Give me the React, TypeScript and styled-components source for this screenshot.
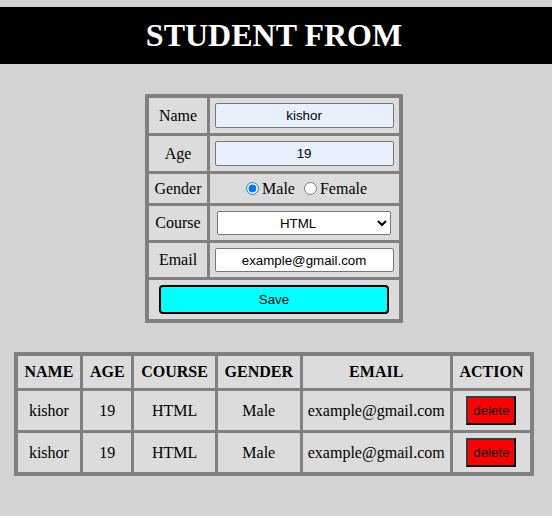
import React from "react";
import styled, { createGlobalStyle } from "styled-components";

const GlobalStyle = createGlobalStyle`
  html, body {
    margin: 0;
    padding: 0;
    background: #d3d3d3;
    font-family: "Liberation Serif", "Times New Roman", serif;
    font-size: 16px;
    color: #000;
  }
`;

const Header = styled.header`
  margin-top: 7px;
  background: #000;
  height: 57px;
  padding-right: 4px;
  display: flex;
  align-items: center;
  justify-content: center;
`;

const Title = styled.h1`
  margin: 0;
  color: #fff;
  font-family: "Liberation Serif", "Times New Roman", serif;
  font-size: 32px;
  font-weight: bold;
  line-height: 37px;
`;

const Main = styled.main`
  display: flex;
  flex-direction: column;
  align-items: center;
  padding: 30px 4px 40px 0;
  gap: 29px;
`;

const Grid = styled.table`
  border: 1px solid #808080;
  background: #808080;
  border-spacing: 3px;
  border-collapse: separate;
`;

const Cell = styled.td<{ $pad?: string }>`
  background: #dcdcdc;
  padding: ${(p) => p.$pad ?? "5px"};
  text-align: center;
  vertical-align: middle;
  font-size: 16px;
  line-height: 18px;
`;

const HeadCell = styled.th`
  background: #dcdcdc;
  padding: 7px 6.8px;
  text-align: center;
  font-size: 16px;
  line-height: 18px;
  font-weight: bold;
`;

const TextInput = styled.input<{ $autofill?: boolean }>`
  box-sizing: border-box;
  width: 179px;
  height: ${(p) => (p.$autofill ? "25px" : "24px")};
  margin: 0;
  display: block;
  border: 1px solid #767676;
  border-radius: 2px;
  background: ${(p) => (p.$autofill ? "#e8f0fe" : "#fff")};
  font-family: "Liberation Sans", Arial, sans-serif;
  font-size: 13.33px;
  text-align: center;
  color: #000;
  padding: 1px 2px;
`;

const Select = styled.select`
  box-sizing: border-box;
  width: 174px;
  height: 24px;
  margin: 0 auto;
  display: block;
  font-family: "Liberation Sans", Arial, sans-serif;
  font-size: 13.33px;
  text-align-last: center;
  color: #000;
`;

const RadioGroup = styled.div`
  display: flex;
  align-items: center;
  justify-content: center;
  font-size: 16px;
  line-height: 19px;
`;

const RadioLabel = styled.label`
  display: inline-flex;
  align-items: center;
  & + & {
    margin-left: 4px;
  }
`;

const Radio = styled.input`
  width: 13px;
  height: 13px;
  margin: 0 3px 0 5px;
`;

const SaveButton = styled.button`
  box-sizing: border-box;
  width: calc(100% - 10px);
  height: 29px;
  margin: 0 auto;
  display: block;
  background: #00ffff;
  border: 2px solid #000;
  border-radius: 4px;
  font-family: "Liberation Sans", Arial, sans-serif;
  font-size: 13.33px;
  color: #000;
`;

const DeleteButton = styled.button`
  box-sizing: border-box;
  width: 50px;
  height: 29px;
  background: #ff0000;
  border-width: 2px;
  border-style: solid;
  border-color: #3c3c3c #000 #000 #3c3c3c;
  font-family: "Liberation Sans", Arial, sans-serif;
  font-size: 13.33px;
  color: #000;
  padding: 0;
`;

const students = [
  { name: "kishor", age: "19", course: "HTML", gender: "Male", email: "example@gmail.com" },
  { name: "kishor", age: "19", course: "HTML", gender: "Male", email: "example@gmail.com" },
];

export default function App() {
  return (
    <>
      <GlobalStyle />
      <Header>
        <Title>STUDENT FROM</Title>
      </Header>
      <Main>
        <Grid>
          <tbody>
            <tr>
              <Cell>Name</Cell>
              <Cell>
                <TextInput $autofill defaultValue="kishor" />
              </Cell>
            </tr>
            <tr>
              <Cell>Age</Cell>
              <Cell>
                <TextInput $autofill defaultValue="19" />
              </Cell>
            </tr>
            <tr>
              <Cell>Gender</Cell>
              <Cell>
                <RadioGroup>
                  <RadioLabel>
                    <Radio type="radio" name="gender" defaultChecked />
                    Male
                  </RadioLabel>
                  <RadioLabel>
                    <Radio type="radio" name="gender" />
                    Female
                  </RadioLabel>
                </RadioGroup>
              </Cell>
            </tr>
            <tr>
              <Cell>Course</Cell>
              <Cell>
                <Select defaultValue="HTML">
                  <option>HTML</option>
                  <option>CSS</option>
                  <option>JavaScript</option>
                </Select>
              </Cell>
            </tr>
            <tr>
              <Cell>Email</Cell>
              <Cell>
                <TextInput defaultValue="example@gmail.com" />
              </Cell>
            </tr>
            <tr>
              <Cell colSpan={2}>
                <SaveButton>Save</SaveButton>
              </Cell>
            </tr>
          </tbody>
        </Grid>

        <Grid>
          <thead>
            <tr>
              <HeadCell>NAME</HeadCell>
              <HeadCell>AGE</HeadCell>
              <HeadCell>COURSE</HeadCell>
              <HeadCell>GENDER</HeadCell>
              <HeadCell>EMAIL</HeadCell>
              <HeadCell>ACTION</HeadCell>
            </tr>
          </thead>
          <tbody>
            {students.map((s, i) => (
              <tr key={i}>
                <Cell>{s.name}</Cell>
                <Cell>{s.age}</Cell>
                <Cell>{s.course}</Cell>
                <Cell>{s.gender}</Cell>
                <Cell>{s.email}</Cell>
                <Cell>
                  <DeleteButton>delete</DeleteButton>
                </Cell>
              </tr>
            ))}
          </tbody>
        </Grid>
      </Main>
    </>
  );
}
